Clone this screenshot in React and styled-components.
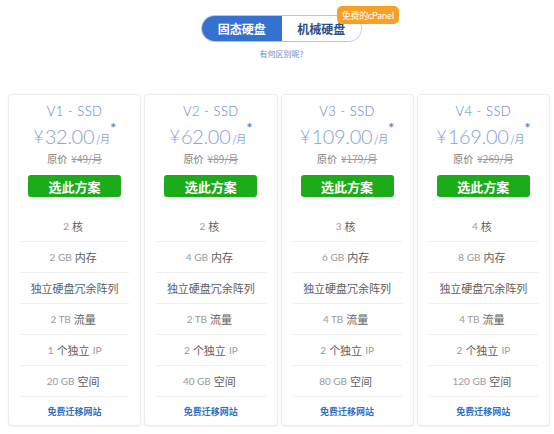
import React from "react";
import styled, { createGlobalStyle } from "styled-components";

const GlobalStyle = createGlobalStyle`
  html, body {
    margin: 0;
    padding: 0;
    background: #fff;
  }
  body {
    font-family: Lato, "Noto Sans CJK SC", sans-serif;
  }
`;

const Page = styled.div`
  width: 554px;
  height: 434px;
  box-sizing: border-box;
  padding: 15px 4px 0 8px;
`;

const Header = styled.div`
  display: flex;
  flex-direction: column;
  align-items: center;
  padding-left: 5px;
`;

const ToggleWrap = styled.div`
  position: relative;
`;

const Toggle = styled.div`
  display: flex;
  width: 161px;
  height: 27px;
  box-sizing: border-box;
  border: 1px solid #a9c4ee;
  border-radius: 14px;
  overflow: hidden;
`;

const Seg = styled.div`
  flex: 1;
  display: flex;
  align-items: center;
  justify-content: center;
  font-family: "Noto Sans CJK SC", sans-serif;
  font-size: 12px;
  font-weight: 700;
  background: ${(p) => (p.active ? "#3571cf" : "#fff")};
  color: ${(p) => (p.active ? "#fff" : "#2e4c80")};
`;

const Badge = styled.div`
  position: absolute;
  top: -9px;
  right: -37px;
  height: 18px;
  padding: 0 5px;
  display: flex;
  align-items: center;
  background: #f6a026;
  color: #fff;
  border-radius: 5px;
  font-family: "Noto Sans CJK SC", sans-serif;
  font-size: 9px;
  letter-spacing: -0.3px;
`;

const Diff = styled.div`
  margin-top: 6px;
  font-family: "Noto Sans CJK SC", sans-serif;
  font-size: 8px;
  color: #6d8fc4;
`;

const Grid = styled.div`
  display: grid;
  grid-template-columns: repeat(4, 1fr);
  gap: 3px;
  width: 542px;
  margin-top: 35px;
`;

const Card = styled.div`
  height: 332px;
  box-sizing: border-box;
  border: 1px solid #ececec;
  border-radius: 4px;
  box-shadow: 0 1px 2px rgba(0, 0, 0, 0.05);
  background: #fff;
  display: flex;
  flex-direction: column;
  align-items: center;
  padding: 7px 11px 0;
`;

const Title = styled.div`
  font-size: 13px;
  font-weight: 300;
  color: #5a7fcb;
  letter-spacing: 0.5px;
  line-height: 18px;
`;

const Price = styled.div`
  margin-top: 5px;
  display: flex;
  align-items: flex-end;
  color: #87a3db;
  line-height: 22px;
`;

const Yen = styled.span`
  font-size: 18px;
  font-weight: 300;
  margin-right: 1px;
`;

const Amount = styled.span`
  font-size: 20px;
  font-weight: 300;
  letter-spacing: -0.3px;
`;

const Per = styled.span`
  font-family: "Noto Sans CJK SC", sans-serif;
  font-size: 10px;
  margin-left: 2px;
  line-height: 16px;
`;

const Star = styled.span`
  font-size: 14px;
  font-weight: 700;
  align-self: flex-start;
  color: #5f82c9;
  line-height: 12px;
  margin-top: -3px;
`;

const Orig = styled.div`
  margin-top: 5px;
  font-family: "Noto Sans CJK SC", sans-serif;
  font-size: 10px;
  color: #777;
  line-height: 14px;
  s {
    color: #999;
    margin-left: 4px;
  }
`;

const Button = styled.button`
  margin-top: 9px;
  width: 93px;
  height: 23px;
  border: none;
  border-radius: 3px;
  background: #1aad19;
  color: #fff;
  font-family: "Noto Sans CJK SC", sans-serif;
  font-size: 13px;
  font-weight: 700;
  padding: 0;
  cursor: pointer;
`;

const List = styled.ul`
  list-style: none;
  margin: 14px 0 0;
  padding: 0;
  width: 100%;
`;

const Row = styled.li`
  height: ${(p) => (p.last ? "28px" : "31px")};
  box-sizing: border-box;
  display: flex;
  align-items: center;
  justify-content: center;
  border-bottom: ${(p) => (p.last ? "none" : "1px solid #eeeeee")};
  font-size: 10px;
  color: #9a9a9a;
  font-family: Lato, "Noto Sans CJK SC", sans-serif;
  b {
    font-weight: 400;
    font-size: 11px;
    color: #5e5e5e;
    font-family: "Noto Sans CJK SC", sans-serif;
    margin: 0 3px;
  }
`;

const Link = styled.a`
  font-family: "Noto Sans CJK SC", sans-serif;
  font-size: 9px;
  font-weight: 700;
  color: #2f6fc6;
  text-decoration: none;
`;

const plans = [
  { name: "V1 - SSD", price: "32.00", orig: "49", cpu: "2", ram: "2", bw: "2", ip: "1", disk: "20" },
  { name: "V2 - SSD", price: "62.00", orig: "89", cpu: "2", ram: "4", bw: "2", ip: "2", disk: "40" },
  { name: "V3 - SSD", price: "109.00", orig: "179", cpu: "3", ram: "6", bw: "4", ip: "2", disk: "80" },
  { name: "V4 - SSD", price: "169.00", orig: "269", cpu: "4", ram: "8", bw: "4", ip: "2", disk: "120" },
];

export default function App() {
  return (
    <>
      <GlobalStyle />
      <Page>
        <Header>
          <ToggleWrap>
            <Toggle>
              <Seg active>固态硬盘</Seg>
              <Seg>机械硬盘</Seg>
            </Toggle>
            <Badge>免费的cPanel</Badge>
          </ToggleWrap>
          <Diff>有何区别呢?</Diff>
        </Header>
        <Grid>
          {plans.map((p) => (
            <Card key={p.name}>
              <Title>{p.name}</Title>
              <Price>
                <Yen>¥</Yen>
                <Amount>{p.price}</Amount>
                <Per>/月</Per>
                <Star>*</Star>
              </Price>
              <Orig>
                原价<s>¥{p.orig}/月</s>
              </Orig>
              <Button>选此方案</Button>
              <List>
                <Row>{p.cpu}<b>核</b></Row>
                <Row>{p.ram} GB<b>内存</b></Row>
                <Row><b>独立硬盘冗余阵列</b></Row>
                <Row>{p.bw} TB<b>流量</b></Row>
                <Row>{p.ip}<b>个独立</b>IP</Row>
                <Row>{p.disk} GB<b>空间</b></Row>
                <Row last><Link href="#">免费迁移网站</Link></Row>
              </List>
            </Card>
          ))}
        </Grid>
      </Page>
    </>
  );
}
